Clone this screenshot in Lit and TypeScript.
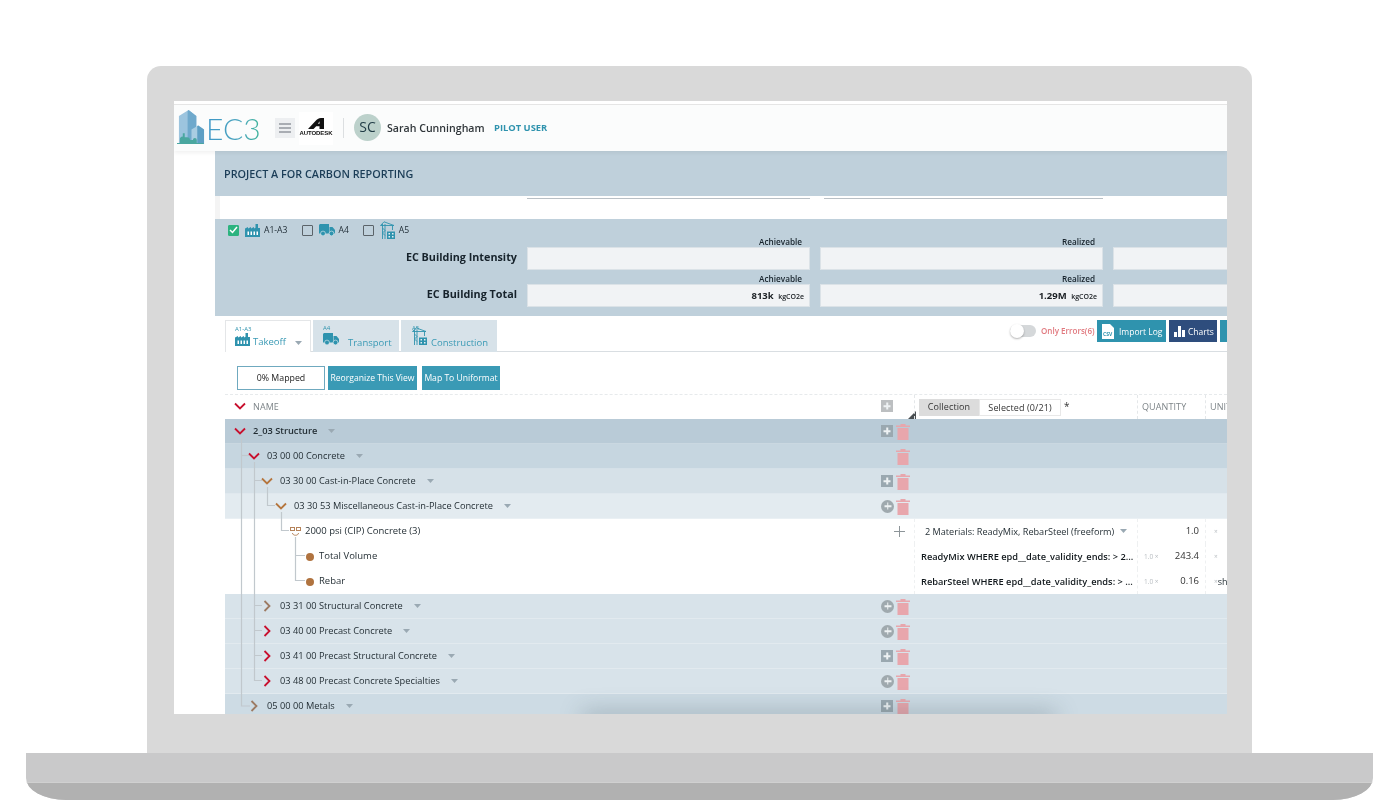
import { LitElement, html, css, svg } from "lit";
import { customElement } from "lit/decorators.js";

const TEAL = "#2f93ae";

const factory = (c = TEAL) => html`<svg width="15" height="14" viewBox="0 0 15 14"><path fill=${c} d="M0 14V5.500l3-1.500v1.500l3-1.500v1.500l3-1.500v1.500l1.500-.7V1H13v4h2v9z"/><path fill="#fff" d="M2.500 8.500H4V12H2.500zM5.500 8.500H7V12H5.500zM8.500 8.500H10V12H8.500zM11.500 8.500H13V12h-1.500z"/></svg>`;
const truck = (c = TEAL) => html`<svg width="16" height="12" viewBox="0 0 16 12"><path fill=${c} d="M0 1.500C0 .7.7 0 1.500 0H10v9.500H0zM10.500 3h3L16 6v3.500h-5.500z"/><circle cx="4" cy="9.500" r="2.400" fill=${c} stroke="#e6eef2" stroke-width=".6"/><circle cx="12.500" cy="9.500" r="2.400" fill=${c} stroke="#e6eef2" stroke-width=".6"/></svg>`;
const crane = (c = TEAL) => html`<svg width="16" height="18" viewBox="0 0 16 18"><path fill="none" stroke=${c} stroke-width=".9" d="M2.500 18V3M5 18V3M.5 4.500L4 .8l10 3.700M.5 4.500h13.500M2.500 7L5 9.500M5 9.500L2.500 12M2.500 12L5 14.500M12.500 4.500V9"/><path fill=${c} d="M7 10.500h8V18H7z"/><path fill="#e6eef2" d="M8.500 12h1.500v1.500H8.500zM12 12h1.500v1.500H12zM8.500 15h1.500v1.500H8.500zM12 15h1.500v1.500H12z"/></svg>`;

const caretSvg = svg`<path d="M0 0h7L3.500 4z"/>`;

type Row = {
  label: string;
  level: number;
  kind: "down" | "right" | "leaf" | "dot";
  tone?: "red" | "tan";
  add?: "box" | "circle" | "none" | "bare";
  bg: string;
  bold?: boolean;
};

const rows: Row[] = [
  { label: "2_03 Structure", level: 0, kind: "down", tone: "red", add: "box", bg: "b0", bold: true },
  { label: "03 00 00 Concrete", level: 1, kind: "down", tone: "red", add: "none", bg: "b1" },
  { label: "03 30 00 Cast-in-Place Concrete", level: 2, kind: "down", tone: "tan", add: "box", bg: "b2" },
  { label: "03 30 53 Miscellaneous Cast-in-Place Concrete", level: 3, kind: "down", tone: "tan", add: "circle", bg: "b3" },
  { label: "2000 psi (CIP) Concrete (3)", level: 4, kind: "leaf", add: "bare", bg: "white" },
  { label: "Total Volume", level: 5, kind: "dot", bg: "white" },
  { label: "Rebar", level: 5, kind: "dot", bg: "white" },
  { label: "03 31 00 Structural Concrete", level: 2, kind: "right", tone: "tan", add: "circle", bg: "b4" },
  { label: "03 40 00 Precast Concrete", level: 2, kind: "right", tone: "red", add: "circle", bg: "b4" },
  { label: "03 41 00 Precast Structural Concrete", level: 2, kind: "right", tone: "red", add: "box", bg: "b4" },
  { label: "03 48 00 Precast Concrete Specialties", level: 2, kind: "right", tone: "red", add: "circle", bg: "b4" },
  { label: "05 00 00 Metals", level: 1, kind: "right", tone: "tan", add: "box", bg: "b5" },
];

const indent = [9, 23, 36, 50, 65, 81];

@customElement("app-root")
export class AppRoot extends LitElement {
  static styles = css`
    :host { display: block; width: 1400px; height: 800px; background: #fff; overflow: hidden; font-family: "Open Sans", sans-serif; color: #222; }
    .page { display: flex; flex-direction: column; padding-top: 66px; height: 800px; box-sizing: border-box; }
    .lid { width: 1105px; height: 687px; margin-left: 147px; box-sizing: border-box; background: #d9d9d9; border-radius: 14px 14px 0 0; padding: 35px 25px 39px 27px; }
    .base { width: 1347px; height: 47px; margin-left: 26px; background: #c9c9ca; border-radius: 0 0 40px 40px / 0 0 22px 22px; overflow: hidden; display: flex; flex-direction: column; justify-content: flex-end; }
    .base-low { height: 17px; background: #b1b1b1; border-top: 1px solid #d0d0d0; }
    .screen { width: 1053px; height: 613px; background: #fff; overflow: hidden; position: relative; filter: blur(0.4px); }
    .glow { position: absolute; left: 410px; width: 470px; bottom: -8px; height: 8px; box-shadow: 0 0 22px 2px rgba(70, 90, 100, .4); z-index: 3; }
    .strip { height: 4px; border-bottom: 1px solid #e6e6e6; box-sizing: border-box; }
    .top { height: 46px; display: flex; align-items: center; background: #fbfcfc; box-shadow: 0 2px 4px rgba(0,0,0,.06); position: relative; z-index: 2; width: 1053px; }
    .logo-icon { margin-left: 3px; flex: none; margin-top: -2px; }
    .logo-text { font-family: "Lato", sans-serif; font-weight: 300; font-size: 30px; line-height: 46px; margin-left: 1px; background: linear-gradient(90deg, #3f97c8, #4aa5bd 55%, #3fb49b 85%); -webkit-background-clip: text; background-clip: text; color: transparent; width: 63px; flex: none; }
    .burger { width: 20px; height: 20px; margin-left: 6px; background: #edeff1; display: flex; flex-direction: column; justify-content: center; gap: 2px; align-items: center; flex: none; }
    .burger i { display: block; width: 12px; height: 2px; background: #a9adb3; }
    .adsk { width: 34px; height: 33px; margin-left: 4px; background: #fff; display: flex; flex-direction: column; align-items: center; justify-content: center; flex: none; box-sizing: border-box; padding-bottom: 1px; }
    .adsk span { font: 700 6px/8px "Liberation Sans", sans-serif; color: #111; letter-spacing: -.1px; }
    .vr { width: 1px; height: 20px; background: #dcdfe1; margin-left: 10px; flex: none; }
    .avatar { width: 27px; height: 27px; border-radius: 50%; background: #bcd1cb; margin-left: 10px; margin-top: -1px; font-size: 14px; line-height: 26px; text-align: center; color: #1f3a44; flex: none; }
    .uname { margin-left: 6px; margin-top: -1px; font-size: 10.600px; font-weight: 600; color: #30363a; width: 107px; flex: none; white-space: nowrap; }
    .pilot { font-size: 9.400px; margin-top: -1px; font-weight: 700; color: #2f93ae; }
    .body { margin-left: 41px; }
    .proj { height: 45px; background: #bfd0db; padding-left: 9px; line-height: 45px; font-size: 10.800px; font-weight: 600; color: #1b3d57; }
    .gap { height: 23px; display: flex; padding-left: 312px; background: linear-gradient(90deg, #f4f4f4 5px, #fff 5px); box-sizing: border-box; }
    .gap i { display: block; height: 2px; border-bottom: 1px solid #b9c0c6; }
    .gap .a { width: 283px; }
    .gap .b { width: 279px; margin-left: 14px; }
    .metrics { background: #bfd0db; height: 97px; padding: 5px 0 0 13px; box-sizing: border-box; }
    .checks { display: flex; align-items: center; height: 14px; padding-bottom: 2px; box-sizing: border-box; font-size: 8.600px; color: #1d2a33; }
    .chk { width: 11px; height: 11px; box-sizing: border-box; border: 1.500px solid #5b6369; border-radius: 1px; flex: none; margin-right: 6px; }
    .chk.on { background: #2cb37f; border-color: #2cb37f; display: flex; align-items: center; justify-content: center; }
    .check-lab { margin-left: 4px; margin-right: 15px; }
    .check-lab.tight { margin-left: 3px; margin-right: 14px; }
    .mrow { display: grid; grid-template-columns: 289px 283px 283px 283px; column-gap: 10px; height: 32px; margin-bottom: 5px; }
    .mlabel { text-align: right; font-size: 10.800px; font-weight: 700; color: #16222b; line-height: 23px; align-self: end; padding-bottom: 2px; }
    .sub { height: 9px; font-size: 8.200px; font-weight: 600; line-height: 7px; text-align: right; padding-right: 8px; color: #16222b; }
    .field { height: 23px; background: #f1f3f5; box-sizing: border-box; border: 1px solid #dbe2e7; text-align: right; padding-right: 5px; line-height: 22px; font-size: 9.500px; font-weight: 700; color: #1a1f23; }
    .field small { font-size: 7px; font-weight: 600; margin-left: 2px; }
    .main { margin-left: 10px; position: relative; }
    .tabsrow { display: flex; margin-top: 4px; height: 32px; border-bottom: 1px solid #d9dee2; box-sizing: border-box; width: 1002px; }
    .tab { height: 32px; box-sizing: border-box; background: #d7e2e9; margin-right: 2px; padding: 5px 0 0 10px; position: relative; flex: none; }
    .tab.active { background: #fff; border: 1px solid #e4e6e8; border-bottom: none; width: 86px; padding-left: 9px; }
    .tab.t2 { width: 86px; }
    .tab.t3 { width: 96px; margin-right: 0; padding-left: 11px; }
    .tab-sm { font-size: 6px; line-height: 7px; color: #2f93ae; }
    .tab-main { display: flex; align-items: flex-end; gap: 3px; font-size: 9.500px; line-height: 12px; color: #3a9ab5; height: 14px; margin-top: -1px; }
    .tab-main.wide { gap: 9px; }
    .tab-main span { position: relative; top: 2px; }
    .tab-main.low span { top: 4px; }
    .tab-main .caret { margin-left: 6px; margin-bottom: 1px; }
    .caret { fill: #9aa9b3; margin-left: 9px; flex: none; }
    .tools { display: flex; margin-left: 513px; flex: none; height: 22px; align-items: flex-start; }
    .toggle { width: 26px; height: 12px; margin-top: 5px; position: relative; background: #d5d8da; border-radius: 6px; flex: none; }
    .toggle i { position: absolute; left: 0; top: -1px; width: 14px; height: 14px; border-radius: 50%; background: #fff; box-shadow: 0 1px 2px rgba(0,0,0,.3); }
    .errs { margin-left: 5px; margin-right: 3px; font-size: 8.050px; font-weight: 600; color: #e1797f; line-height: 22px; width: 53px; white-space: nowrap; }
    .tbtn { height: 22px; background: #2f93ae; color: #fff; font-size: 8.500px; display: flex; align-items: center; gap: 3px; box-sizing: border-box; flex: none; margin-right: 3px; }
    .tbtn.import { width: 69px; padding-left: 5px; gap: 5px; }
    .tbtn.charts { width: 48px; background: #2e4d7d; padding-left: 5px; }
    .tbtn.more { width: 20px; }
    .bar { display: flex; margin: 14px 0 4px 12px; height: 24px; }
    .mapped { width: 88px; box-sizing: border-box; border: 1px solid #6fa9bf; font-size: 8.800px; line-height: 22px; text-align: center; color: #222; }
    .btn { background: #3a9ab5; color: #fff; font-size: 8.600px; line-height: 24px; text-align: center; height: 24px; margin-left: 3px; }
    .btn.r { width: 89px; }
    .btn.m { width: 78px; margin-left: 5px; }
    .thead { display: grid; grid-template-columns: 689px 223px 68px 1fr; height: 25px; border-top: 1px dashed #e7eaec; box-sizing: border-box; width: 1002px; }
    .th { display: flex; align-items: center; font-size: 9px; color: #7d8488; position: relative; border-left: 1px dashed #e4e7e9; padding-left: 4px; padding-bottom: 2px; box-sizing: border-box; letter-spacing: .1px; }
    .th.name { border-left: none; padding-left: 9px; }
    .th.name .nm { margin-left: 7px; flex: 1; }
    .th.name .chev { margin: -1px 0 0; }
    .th.name .plusbox { margin-right: 21px; }
    .plusbox { width: 12px; height: 12px; background: #bcbfc1; position: relative; flex: none; }
    .plusbox.dark { background: #9aa8b0; }
    .plusbox.circle { border-radius: 50%; width: 13px; height: 13px; background: #9fa9ae; }
    .plusbox::before { content: ""; position: absolute; left: 50%; top: 50%; width: 7px; height: 1.500px; background: #eef2f4; transform: translate(-50%, -50%); }
    .plusbox::after { content: ""; position: absolute; left: 50%; top: 50%; width: 1.500px; height: 7px; background: #eef2f4; transform: translate(-50%, -50%); }
    .corner { position: absolute; right: -2px; bottom: 0; width: 0; height: 0; border-left: 8px solid transparent; border-bottom: 8px solid #4a4f52; }
    .segs { display: flex; align-items: flex-start; padding-top: 4px; padding-bottom: 0; align-self: stretch; height: 100%; box-sizing: border-box; }
    .seg1 { background: #dcdcdc; width: 60px; height: 17px; line-height: 16px; text-align: center; color: #333; font-size: 9px; }
    .seg2 { width: 82px; height: 17px; border: 1px solid #e8e8e8; box-sizing: border-box; line-height: 16px; text-align: center; color: #333; font-size: 9px; }
    .star { margin-left: 3px; color: #333; font-size: 10px; line-height: 14px; }
    .tree { position: relative; width: 1002px; }
    .lines { position: absolute; left: 0; top: 0; z-index: 1; pointer-events: none; }
    .row { display: grid; grid-template-columns: 689px 223px 68px 1fr; height: 25px; border-bottom: 1px solid rgba(255,255,255,.25); box-sizing: border-box; font-size: 9.250px; color: #1f2a30; }
    .row.white { border-bottom: none; background: #fff; }
    .row.b0 { background: #b9cbd7; }
    .row.b1 { background: #c6d6e0; }
    .row.b2 { background: #d6e1e8; }
    .row.b3 { background: #e3ebf0; }
    .row.b4 { background: #d8e3ea; }
    .row.b5 { background: #cddbe4; }
    .ncell { display: flex; align-items: center; min-width: 0; }
    .chev { width: 12px; height: 12px; flex: none; margin-right: 7px; }
    .leaf { flex: none; margin-right: 4px; }
    .dot { width: 8px; height: 8px; border-radius: 50%; background: #b0733f; flex: none; margin-right: 5px; }
    .lab { white-space: nowrap; margin-top: -2px; }
    .lab.bold { font-weight: 600; }
    .lab.big { font-size: 9.500px; }
    .row .caret { margin-left: 11px; }
    .acts { margin-left: auto; display: flex; align-items: center; width: 33px; flex: none; }
    .acts.bare { width: 20px; }
    .acts .slot { width: 15px; flex: none; display: flex; }
    .bareplus { width: 11px; height: 11px; position: relative; margin-left: 0; }
    .bareplus::before { content: ""; position: absolute; left: 0; top: 5px; width: 11px; height: 1px; background: #8d9599; }
    .bareplus::after { content: ""; position: absolute; left: 5px; top: 0; width: 1px; height: 11px; background: #8d9599; }
    .c { display: flex; align-items: center; border-left: 1px dashed #eef0f1; box-sizing: border-box; white-space: nowrap; overflow: hidden; font-size: 9.150px; padding-bottom: 1px; }
    .c.mat { padding-left: 10px; }
    .c.q { padding-left: 6px; font-size: 9.250px; font-weight: 600; color: #11181c; }
    .c.mat .caret { margin-left: 6px; }
    .c.val { padding-left: 6px; }
    .num { margin-left: auto; margin-top: -2px; padding-right: 6px; font-size: 9.500px; color: #333; }
    .lite { color: #b9bec2; font-size: 6.500px; }
    .c.u { padding-left: 8px; font-size: 9px; }
  `;

  private chev(r: Row) {
    const col = r.tone === "red" ? "#c8102e" : r.kind === "down" ? "#b5763e" : "#9c7a63";
    const d = r.kind === "down" ? "M1 3.500l5 5 5-5" : "M3.500 1l5 5-5 5";
    return html`<svg class="chev" viewBox="0 0 12 12"><path d=${d} fill="none" stroke=${col} stroke-width="1.800"/></svg>`;
  }

  private rowCells(i: number) {
    if (i === 4)
      return html`<div class="c mat">2 Materials: ReadyMix, RebarSteel (freeform)<svg class="caret" width="7" height="4">${caretSvg}</svg></div>
        <div class="c"><span class="num">1.0</span></div>
        <div class="c u"><span class="lite">×</span></div>`;
    if (i === 5)
      return html`<div class="c q">ReadyMix WHERE epd__date_validity_ends: &gt; 2...</div>
        <div class="c val"><span class="lite">1.0 ×</span><span class="num">243.4</span></div>
        <div class="c u"><span class="lite">×</span></div>`;
    if (i === 6)
      return html`<div class="c q">RebarSteel WHERE epd__date_validity_ends: &gt; ...</div>
        <div class="c val"><span class="lite">1.0 ×</span><span class="num">0.16</span></div>
        <div class="c u"><span class="lite">×</span>sh</div>`;
    return html`<div></div><div></div><div></div>`;
  }

  private acts(r: Row) {
    if (r.kind === "dot") return null;
    const trash = html`<svg width="14" height="17" viewBox="0 0 14 17"><path fill="#e8a6ac" d="M0 2.500h14V4H0zM4.500 1h5v1.500h-5zM1.500 5h11v12h-11z"/></svg>`;
    if (r.add === "bare") return html`<div class="acts bare"><div class="bareplus"></div></div>`;
    return html`<div class="acts">
      <div class="slot">${r.add === "box" ? html`<div class="plusbox dark"></div>` : r.add === "circle" ? html`<div class="plusbox circle"></div>` : null}</div>
      ${trash}
    </div>`;
  }

  render() {
    return html`<div class="page">
      <div class="lid"><div class="screen">
        <div class="strip"></div>
        <div class="top">
          <svg class="logo-icon" width="28" height="34" viewBox="0 0 29 35">
            <path fill="#9cc4de" d="M2 6L12 0l8 6v29H2z"/>
            <path fill="#6fa9cc" d="M11 .8l1-.8 8 6v29h-9z"/>
            <path fill="#a9cde2" d="M15 20l7-4 6 4v15H15z"/>
            <path fill="#5e9fc4" d="M21 16.500l1-.5 6 4v15h-7z"/>
            <path fill="#4aa7a0" d="M0 35v-1h3v-4a2.500 2.500 0 0 1 3-2.500V24h2v4h2.500a3 3 0 0 1 3 3h3a2 2 0 0 1 4 0v3h7v1z"/>
          </svg>
          <div class="logo-text">EC3</div>
          <div class="burger"><i></i><i></i><i></i></div>
          <div class="adsk">
            <svg width="16" height="11" viewBox="0 0 16 11"><path fill="#111" d="M0 11L7 3.500C9 1.300 10.500 0 13 0h3v11h-4.500V8.200H8.200L5.500 11zM10 5.800h1.500V3.300z"/></svg>
            <span>AUTODESK</span>
          </div>
          <div class="vr"></div>
          <div class="avatar">SC</div>
          <div class="uname">Sarah Cunningham</div>
          <div class="pilot">PILOT USER</div>
        </div>
        <div class="body">
          <div class="proj">PROJECT A FOR CARBON REPORTING</div>
          <div class="gap"><i class="a"></i><i class="b"></i></div>
          <div class="metrics">
            <div class="checks">
              <div class="chk on"><svg width="9" height="8" viewBox="0 0 9 8"><path d="M1 4l2.500 2.500L8 1" fill="none" stroke="#fff" stroke-width="1.500"/></svg></div>
              ${factory()}<span class="check-lab">A1-A3</span>
              <div class="chk"></div>${truck()}<span class="check-lab tight">A4</span>
              <div class="chk"></div>${crane()}<span class="check-lab tight">A5</span>
            </div>
            <div class="mrow">
              <div class="mlabel">EC Building Intensity</div>
              <div><div class="sub">Achievable</div><div class="field"></div></div>
              <div><div class="sub">Realized</div><div class="field"></div></div>
              <div><div class="sub"></div><div class="field"></div></div>
            </div>
            <div class="mrow">
              <div class="mlabel">EC Building Total</div>
              <div><div class="sub">Achievable</div><div class="field">813k <small>kgCO2e</small></div></div>
              <div><div class="sub">Realized</div><div class="field">1.29M <small>kgCO2e</small></div></div>
              <div><div class="sub"></div><div class="field"></div></div>
            </div>
          </div>
          <div class="main">
            <div class="tabsrow">
              <div class="tab active">
                <div class="tab-sm">A1-A3</div>
                <div class="tab-main">${factory()}<span>Takeoff</span><svg class="caret" width="7" height="4">${caretSvg}</svg></div>
              </div>
              <div class="tab t2">
                <div class="tab-sm">A4</div>
                <div class="tab-main low wide">${truck()}<span>Transport</span></div>
              </div>
              <div class="tab t3">
                <div class="tab-sm">A5</div>
                <div class="tab-main low">${crane()}<span>Construction</span></div>
              </div>
              <div class="tools">
                <div class="toggle"><i></i></div>
                <div class="errs">Only Errors(6)</div>
                <div class="tbtn import">
                  <svg width="12" height="15" viewBox="0 0 12 15"><path fill="#fff" d="M0 0h8l4 4v11H0z"/><text x="1" y="12" font-size="5" font-weight="700" fill="#2f93ae" font-family="Open Sans">CSV</text></svg>
                  Import Log
                </div>
                <div class="tbtn charts">
                  <svg width="11" height="11" viewBox="0 0 11 11"><path fill="#fff" d="M0 6h3v5H0zM4 0h3v11H4zM8 4h3v7H8z"/></svg>
                  Charts
                </div>
                <div class="tbtn more"></div>
              </div>
            </div>
            <div class="bar">
              <div class="mapped">0% Mapped</div>
              <div class="btn r">Reorganize This View</div>
              <div class="btn m">Map To Uniformat</div>
            </div>
            <div class="thead">
              <div class="th name">
                <svg class="chev" viewBox="0 0 12 12"><path d="M1 3.500l5 5 5-5" fill="none" stroke="#c8102e" stroke-width="1.800"/></svg>
                <span class="nm">NAME</span>
                <div class="plusbox"></div>
                <div class="corner"></div>
              </div>
              <div class="th segs"><div class="seg1">Collection</div><div class="seg2">Selected (0/21)</div><span class="star">*</span></div>
              <div class="th">QUANTITY</div>
              <div class="th">UNIT</div>
            </div>
            <div class="tree">
              ${rows.map((r, i) => html`<div class="row ${r.bg}">
                <div class="ncell" style="padding-left:${indent[r.level]}px">
                  ${r.kind === "down" || r.kind === "right"
                    ? this.chev(r)
                    : r.kind === "leaf"
                      ? html`<svg class="leaf" width="11" height="12" viewBox="0 0 11 12"><g fill="none" stroke="#b5835a"><rect x=".5" y="1.500" width="4" height="3"/><rect x="6.500" y="1.500" width="4" height="3"/><path d="M2.500 7c0 3 6 3 6 0"/></g></svg>`
                      : html`<div class="dot"></div>`}
                  <span class="lab ${r.bold ? "bold" : ""} ${r.level > 3 ? "big" : ""}">${r.label}</span>
                  ${r.kind === "down" || r.kind === "right" ? html`<svg class="caret" width="7" height="4">${caretSvg}</svg>` : null}
                  ${this.acts(r)}
                </div>
                ${this.rowCells(i)}
              </div>`)}
              <svg class="lines" width="90" height="295" fill="none" stroke="#c1c8cd" stroke-width="1.200">
                <path d="M16.500 19V287H25"/>
                <path d="M16.500 36.500H24"/>
                <path d="M29.500 43V261.500H37M29.500 61.500H37M29.500 186.500H37M29.500 211.500H37M29.500 236.500H37"/>
                <path d="M42.500 68V86.500H50"/>
                <path d="M56.500 93V111.500H64"/>
                <path d="M70.500 118V161.500H80M70.500 136.500H80"/>
              </svg>
            </div>
          </div>
        </div>
        <div class="glow"></div>
      </div></div>
      <div class="base"><div class="base-low"></div></div>
    </div>`;
  }
}
